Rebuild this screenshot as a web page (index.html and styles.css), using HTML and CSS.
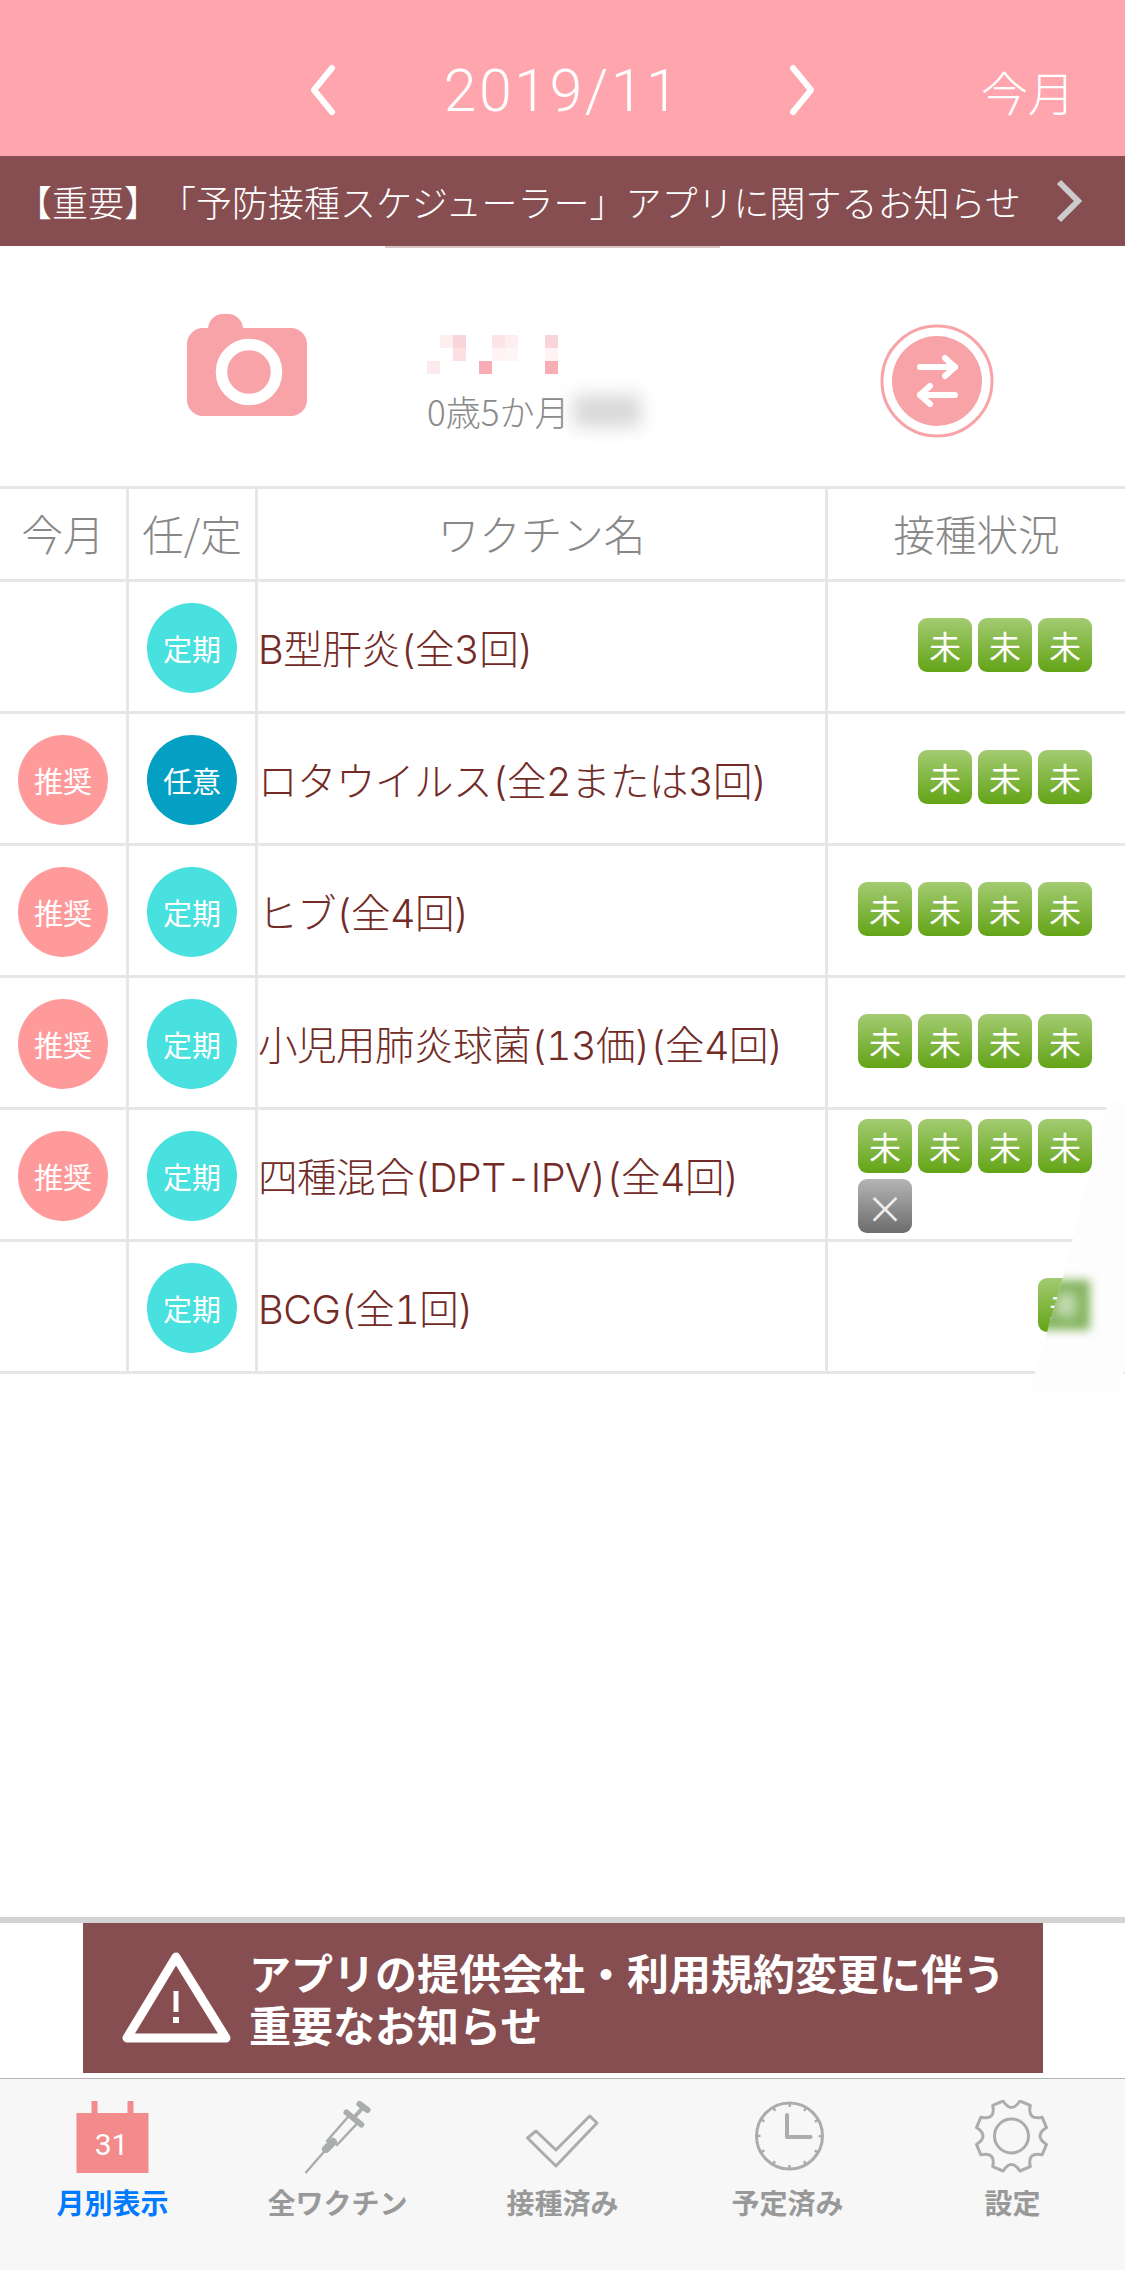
FILE: index.html
```html
<!DOCTYPE html>
<html lang="ja">
  <head>
    <meta charset="utf-8">
    <title>予防接種スケジューラー</title>
    <link rel="stylesheet" href="styles.css">
  </head>
  <body>
    <div class="app">
      <header class="topbar">
        <svg class="chevron prev" viewBox="0 0 36 60"><polyline points="27,8 9,30 27,52"/></svg>
        <div class="month">2019/11</div>
        <svg class="chevron next" viewBox="0 0 36 60"><polyline points="9,8 27,30 9,52"/></svg>
        <div class="today">今月</div>
      </header>

      <a class="notice-bar">
        <span class="notice-text">【重要】「予防接種スケジューラー」アプリに関するお知らせ</span>
        <svg class="notice-arrow" viewBox="0 0 30 46"><polyline points="6,4 25,23 6,42"/></svg>
        <span class="notice-smear"></span>
      </a>

      <section class="profile">
        <svg class="camera" viewBox="0 0 120 104">
          <rect x="21" y="0" width="35" height="30" rx="15" fill="#f8a3a8"/>
          <rect x="0" y="14" width="120" height="88" rx="16" fill="#f8a3a8"/>
          <circle cx="62" cy="58" r="27.5" fill="none" stroke="#fff" stroke-width="11.5"/>
        </svg>
        <div class="child">
          <svg class="child-name" viewBox="0 0 143 39">
            <rect x="13" y="0" width="13" height="13" fill="#fdeef0"/>
            <rect x="26" y="0" width="13" height="13" fill="#f9d5d9"/>
            <rect x="65" y="0" width="13" height="13" fill="#fde4e7"/>
            <rect x="78" y="0" width="13" height="13" fill="#fdeef0"/>
            <rect x="118" y="0" width="13" height="13" fill="#f9d5d9"/>
            <rect x="26" y="13" width="13" height="13" fill="#fbdfe2"/>
            <rect x="65" y="13" width="13" height="13" fill="#fff3f5"/>
            <rect x="78" y="13" width="13" height="13" fill="#fef5f6"/>
            <rect x="118" y="13" width="13" height="13" fill="#fff3f5"/>
            <rect x="0" y="26" width="13" height="13" fill="#fdeaec"/>
            <rect x="52" y="26" width="13" height="13" fill="#f6aeb4"/>
            <rect x="118" y="26" width="13" height="13" fill="#f6aeb4"/>
          </svg>
          <div class="child-age">0歳5か月<span class="age-blur"></span></div>
        </div>
        <svg class="switch" viewBox="0 0 114 114">
          <circle cx="57" cy="57" r="55" fill="none" stroke="#f8a3a8" stroke-width="3"/>
          <circle cx="57" cy="57" r="45" fill="#f8a3a8"/>
          <g fill="none" stroke="#fff" stroke-width="6" stroke-linecap="round" stroke-linejoin="round">
            <polyline points="40,43 75,43"/>
            <polyline points="65,34 75,43 65,52"/>
            <polyline points="75,71 40,71"/>
            <polyline points="50,62 40,71 50,80"/>
          </g>
        </svg>
      </section>

      <section class="vaccines">
        <div class="row head">
          <div class="cell">今月</div>
          <div class="cell">任/定</div>
          <div class="cell">ワクチン名</div>
          <div class="cell">接種状況</div>
        </div>

        <div class="row">
          <div class="cell mark"></div>
          <div class="cell mark"><span class="dot teikai">定期</span></div>
          <div class="cell name">B型肝炎(全3回)</div>
          <div class="cell status">
            <div class="shots"><span class="shot">未</span><span class="shot">未</span><span class="shot">未</span></div>
          </div>
        </div>

        <div class="row">
          <div class="cell mark"><span class="dot rec">推奨</span></div>
          <div class="cell mark"><span class="dot nini">任意</span></div>
          <div class="cell name">ロタウイルス(全2または3回)</div>
          <div class="cell status">
            <div class="shots"><span class="shot">未</span><span class="shot">未</span><span class="shot">未</span></div>
          </div>
        </div>

        <div class="row">
          <div class="cell mark"><span class="dot rec">推奨</span></div>
          <div class="cell mark"><span class="dot teikai">定期</span></div>
          <div class="cell name">ヒブ(全4回)</div>
          <div class="cell status">
            <div class="shots"><span class="shot">未</span><span class="shot">未</span><span class="shot">未</span><span class="shot">未</span></div>
          </div>
        </div>

        <div class="row">
          <div class="cell mark"><span class="dot rec">推奨</span></div>
          <div class="cell mark"><span class="dot teikai">定期</span></div>
          <div class="cell name">小児用肺炎球菌(13価)(全4回)</div>
          <div class="cell status">
            <div class="shots"><span class="shot">未</span><span class="shot">未</span><span class="shot">未</span><span class="shot">未</span></div>
          </div>
        </div>

        <div class="row">
          <div class="cell mark"><span class="dot rec">推奨</span></div>
          <div class="cell mark"><span class="dot teikai">定期</span></div>
          <div class="cell name">四種混合(DPT-IPV)(全4回)</div>
          <div class="cell status">
            <div class="shots two-lines"><span class="shot">未</span><span class="shot">未</span><span class="shot">未</span><span class="shot">未</span><span class="shot off">×</span></div>
          </div>
        </div>

        <div class="row">
          <div class="cell mark"></div>
          <div class="cell mark"><span class="dot teikai">定期</span></div>
          <div class="cell name">BCG(全1回)</div>
          <div class="cell status">
            <div class="shots"><span class="shot">未</span></div>
          </div>
        </div>

        <!-- retouched corner of the screenshot -->
        <div class="retouch"><span class="retouch-smudge"></span><span class="retouch-glow"></span></div>
      </section>

      <div class="spacer"></div>

      <div class="promo-wrap">
        <div class="promo">
          <svg class="promo-icon" viewBox="0 0 110 94">
            <path d="M54 6 L5 87 L104 87 Z" fill="none" stroke="#fff" stroke-width="9" stroke-linejoin="round"/>
            <path d="M54 40 L54 61" stroke="#fff" stroke-width="5"/>
            <rect x="51" y="66" width="6" height="6" fill="#fff"/>
          </svg>
          <div class="promo-text">アプリの提供会社・利用規約変更に伴う<br>重要なお知らせ</div>
        </div>
      </div>

      <nav class="tabs">
        <a class="tab active">
          <svg viewBox="0 0 90 76">
            <rect x="8.5" y="13" width="72" height="60" fill="#f38a8b"/>
            <rect x="23.5" y="1" width="6" height="12" fill="#f38a8b"/>
            <rect x="59.5" y="1" width="6" height="12" fill="#f38a8b"/>
            <text class="cal-day" x="43.5" y="55" text-anchor="middle">31</text>
          </svg>
          <span>月別表示</span>
        </a>
        <a class="tab">
          <svg viewBox="0 0 90 76" fill="none" stroke="#a9aeaa" stroke-linecap="round">
            <path d="M12.5 73 L32.5 50" stroke-width="2.5" stroke-linecap="butt"/>
            <path d="M33 49 L40 42" stroke-width="8"/>
            <path d="M34 41 L55.8 16 M44 45 L65.8 21.7" stroke-width="2.5"/>
            <path d="M53.5 12.5 L68.2 24.5" stroke-width="6"/>
            <path d="M60.5 18 L71 6.5" stroke-width="4" stroke-linecap="butt"/>
            <path d="M66.5 4 L74.5 10" stroke-width="6"/>
          </svg>
          <span>全ワクチン</span>
        </a>
        <a class="tab">
          <svg viewBox="0 0 90 76" fill="none" stroke="#a9aeaa">
            <polygon points="9.5,38 18,31 37.9,50 71.8,16 79,23 37.9,66" stroke-width="3" stroke-linejoin="round"/>
          </svg>
          <span>接種済み</span>
        </a>
        <a class="tab">
          <svg viewBox="0 0 90 76" fill="none" stroke="#a9aeaa">
            <circle cx="46.5" cy="36" r="33" stroke-width="3"/>
            <circle cx="46.5" cy="36" r="31" stroke-width="4" stroke-dasharray="2.5 13.73" stroke-dashoffset="1.25"/>
            <polyline points="44,15 44,37 67.5,37" stroke-width="4" stroke-linejoin="round" stroke-linecap="round"/>
          </svg>
          <span>予定済み</span>
        </a>
        <a class="tab">
          <svg viewBox="0 0 90 76" fill="none" stroke="#a9aeaa" stroke-width="3">
            <g transform="translate(43.5 36)">
              <path d="M8.4 -35 L18.8 -30.7 Q15.6 -15.6 30.7 -18.8 L35 -8.4 Q22 0 35 8.4 L30.7 18.8 Q15.6 15.6 18.8 30.7 L8.4 35 Q0 22 -8.4 35 L-18.8 30.7 Q-15.6 15.6 -30.7 18.8 L-35 8.4 Q-22 0 -35 -8.4 L-30.7 -18.8 Q-15.6 -15.6 -18.8 -30.7 L-8.4 -35 Q0 -22 8.4 -35 Z" stroke-linejoin="round"/>
              <circle r="17"/>
            </g>
          </svg>
          <span>設定</span>
        </a>
      </nav>
    </div>
  </body>
</html>
```

FILE: styles.css
```css
body {
  margin: 0;
  background-color: #fff;
  font-family: "Noto Sans CJK JP", "Noto Sans", sans-serif;
}

.app {
  width: 1125px;
  height: 2270px;
  display: flex;
  flex-direction: column;
  overflow: hidden;
}

/* Month header */
.topbar {
  box-sizing: border-box;
  height: 156px;
  padding-top: 24px;
  background-color: #ffa5ad;
  color: #fff;
  display: grid;
  grid-template-columns: 305px 36px 443px 36px 1fr;
  align-items: center;
}

.chevron {
  grid-row: 1;
  width: 36px;
  height: 60px;
  fill: none;
  stroke: #fff;
  stroke-width: 6;
  stroke-linecap: round;
  stroke-linejoin: round;
}

.prev {
  grid-column: 2;
}

.next {
  grid-column: 4;
}

.month {
  grid-column: 3;
  text-align: center;
  font-family: Roboto, "Liberation Sans", sans-serif;
  font-weight: 300;
  font-size: 59px;
  letter-spacing: 2.5px;
}

.today {
  grid-column: 5;
  text-align: right;
  padding-right: 50px;
  font-size: 47px;
  font-weight: 300;
}

/* Notice strip */
.notice-bar {
  position: relative;
  height: 90px;
  background-color: #864e51;
  color: #fff;
  display: flex;
  align-items: center;
  padding-left: 16px;
}

.notice-text {
  font-size: 36px;
  font-weight: 300;
  white-space: nowrap;
  text-spacing-trim: space-all;
}

.notice-arrow {
  width: 30px;
  height: 46px;
  margin-left: 32px;
  fill: none;
  stroke: #cccccc;
  stroke-width: 6;
}

.notice-smear {
  position: absolute;
  left: 385px;
  top: 90px;
  width: 335px;
  height: 2px;
  background-color: #d9c7c8;
}

/* Child profile */
.profile {
  height: 240px;
  display: flex;
  align-items: center;
  padding-left: 187px;
}

.camera {
  width: 120px;
  height: 104px;
}

.child {
  width: 453px;
  margin-left: 120px;
  margin-top: 39px;
}

.child-name {
  display: block;
  width: 143px;
  height: 39px;
}

.child-age {
  margin-top: 12px;
  font-size: 35px;
  line-height: 50px;
  font-weight: 300;
  color: #8a8a8a;
  display: flex;
  align-items: center;
}

.age-blur {
  width: 68px;
  height: 32px;
  margin-left: 4px;
  background-color: #d8d8d8;
  filter: blur(9px);
}

.switch {
  width: 114px;
  height: 114px;
  margin-top: 29px;
}

/* Vaccine table */
.vaccines {
  position: relative;
  border-top: 3px solid #e6e6e6;
}

.row {
  box-sizing: border-box;
  height: 132px;
  display: grid;
  grid-template-columns: 129px 129px 570px 1fr;
  border-bottom: 3px solid #e6e6e6;
}

.row.head {
  height: 93px;
  color: #888;
  font-size: 41.5px;
  font-weight: 300;
}

.row.head .cell {
  padding-bottom: 3px;
}

.cell {
  display: flex;
  align-items: center;
  justify-content: center;
  border-right: 3px solid #e6e6e6;
}

.cell:last-child {
  border-right: none;
}

.cell.mark {
  padding-top: 3px;
}

.cell.name {
  justify-content: flex-start;
  color: #722b27;
  font-family: Inter, "Noto Sans CJK JP", sans-serif;
  font-size: 39.5px;
  font-weight: 300;
  font-variant-numeric: tabular-nums;
  letter-spacing: -0.5px;
  white-space: nowrap;
}

.cell.status {
  justify-content: flex-end;
  padding: 0 33px 3px 0;
}

.dot {
  width: 90px;
  height: 90px;
  border-radius: 50%;
  color: #fff;
  font-size: 29px;
  display: flex;
  align-items: center;
  justify-content: center;
}

.teikai {
  background-color: #49e0e0;
}

.nini {
  background-color: #03a0c3;
}

.rec {
  background-color: #ff9a9b;
}

.shots {
  max-width: 234px;
  display: flex;
  flex-wrap: wrap;
  gap: 6px;
}

.shots.two-lines {
  margin-top: 6px;
}

.shot {
  width: 54px;
  height: 54px;
  border-radius: 9px;
  background: linear-gradient(#a3cb72, #63a416);
  color: #fff;
  font-size: 32px;
  display: flex;
  align-items: center;
  justify-content: center;
}

.shot.off {
  background: linear-gradient(#b5b5b5, #6c6c6c);
  font-size: 38px;
  color: #eee;
}

.retouch {
  position: absolute;
  left: 1030px;
  top: 612px;
  width: 95px;
  height: 300px;
  background-color: #fdfdfd;
  clip-path: polygon(78px 0, 95px 0, 95px 268px, 87px 290px, 0 290px, 32px 180px);
  overflow: hidden;
}

.retouch-smudge {
  position: absolute;
  left: 8px;
  top: 179px;
  width: 52px;
  height: 50px;
  background-color: #85b55f;
  filter: blur(5px);
}

.retouch-glow {
  position: absolute;
  left: 26px;
  top: 192px;
  width: 20px;
  height: 24px;
  background-color: #c3dbb0;
  filter: blur(6px);
}

.spacer {
  flex: 1;
}

/* Promo banner */
.promo-wrap {
  border-top: 6px solid #d3d3d3;
  height: 155px;
  padding-left: 83px;
}

.promo {
  width: 960px;
  height: 150px;
  background-color: #864e51;
  display: flex;
  align-items: center;
}

.promo-icon {
  width: 110px;
  height: 94px;
  margin-left: 39px;
  flex-shrink: 0;
}

.promo-text {
  margin-left: 17px;
  color: #fff;
  font-size: 42px;
  line-height: 52px;
  font-weight: 700;
  white-space: nowrap;
}

/* Tab bar */
.tabs {
  box-sizing: border-box;
  height: 192px;
  padding-top: 21px;
  background-color: #f7f7f7;
  border-top: 1px solid #b4b4b4;
  display: grid;
  grid-template-columns: repeat(5, 225px);
}

.tab {
  display: flex;
  flex-direction: column;
  align-items: center;
  color: #999;
  font-size: 28px;
  font-weight: 700;
}

.tab svg {
  width: 90px;
  height: 76px;
}

.tab span {
  margin-top: 6px;
  line-height: 40px;
}

.tab.active {
  color: #007aff;
}

.cal-day {
  font-family: Roboto, sans-serif;
  font-size: 30px;
  font-weight: 400;
  fill: #fff;
}
```
